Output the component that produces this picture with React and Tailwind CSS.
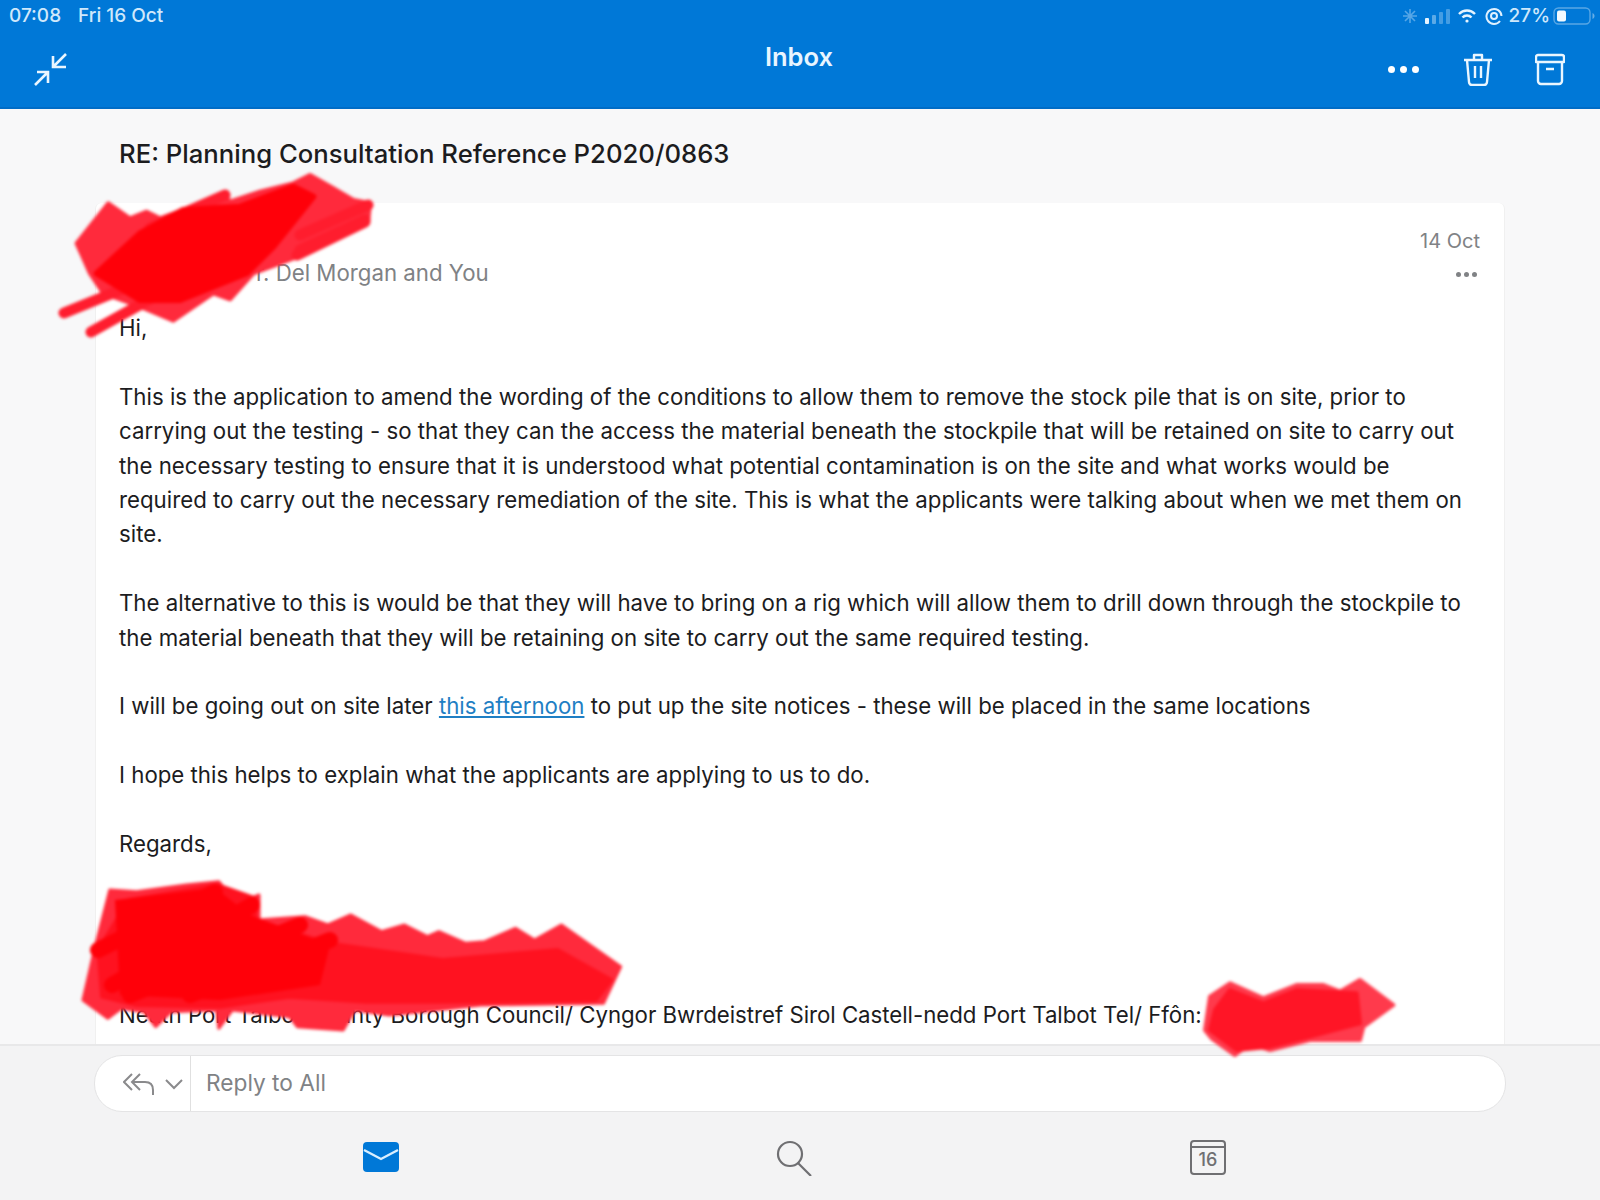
import React from "react";

const pts = (list, ox, oy, sx, sy) =>
  list.map(([x, y]) => `${ox + x * sx},${oy + y * sy}`).join(" ");

// redaction scribbles, traced from the screenshot
const topEdge = [[205,130],[110,250],[150,340],[190,400],[300,440],[400,482],[520,400],[570,418],[640,340],[760,295],[985,180],[990,130],[940,120],[880,85],[810,45],[760,70],[660,95],[570,125],[550,100],[430,150],[360,175],[320,155],[270,175]];
const topCore = [[170,340],[300,220],[430,150],[600,140],[760,80],[820,110],[700,260],[620,340],[420,420],[300,420]];
const signEdge = [[130,60],[90,240],[60,390],[125,445],[160,415],[220,425],[250,470],[290,425],[410,420],[415,475],[450,420],[600,440],[620,470],[740,480],[770,420],[860,435],[1100,405],[1420,400],[1465,290],[1310,165],[1240,210],[1190,175],[1110,215],[1060,220],[990,185],[960,200],[900,165],[840,185],[760,135],[700,165],[640,140],[520,150],[520,75],[480,95],[440,70],[415,35],[330,45],[200,65]];
const signCore = [[100,240],[180,90],[410,45],[510,85],[510,150],[700,220],[1000,270],[1300,240],[1440,330],[1400,390],[1100,395],[800,395],[600,380],[420,410],[200,405],[110,380]];
const phoneEdge = [[180,110],[240,70],[340,115],[440,75],[520,75],[570,95],[630,60],[730,135],[640,200],[630,240],[480,240],[360,270],[300,250],[255,285],[185,235],[165,210]];
const phoneCore = [[195,150],[240,90],[340,130],[440,90],[620,100],[630,190],[480,230],[360,260],[260,270],[180,210]];

function Redactions() {
  return (
    <svg className="absolute top-0 left-0 blur-[1.5px] pointer-events-none" width="1600" height="1200" viewBox="0 0 1600 1200" strokeLinejoin="round" strokeLinecap="round" fill="none">
      <polygon points={pts(topEdge, 40, 160, 1 / 3, 1 / 3)} fill="#ff2a3c" stroke="#ff2a3c" strokeWidth="4" />
      <path d="M64 313L150 278M91 332L170 288M368 205L300 235M365 220L300 250M297 255L365 222M225 195L150 228" stroke="#ff1d2e" strokeWidth="11" />
      <polygon points={pts(topCore, 40, 160, 1 / 3, 1 / 3)} fill="#ff0009" stroke="#ff0009" strokeWidth="6" />
      <polygon points={pts(signEdge, 60, 870, 0.3827, 1 / 3)} fill="#ff2a3c" stroke="#ff2a3c" strokeWidth="3" />
      <polygon points={pts(signCore, 60, 870, 0.3827, 1 / 3)} fill="#ff1220" stroke="#ff1220" strokeWidth="4" />
      <path d="M98 950L215 892M112 985L252 905M130 995L300 925M190 995L330 940" stroke="#ff0009" strokeWidth="16" />
      <polygon points="115,900 215,888 250,915 330,945 320,985 220,1000 120,995" fill="#ff0009" />
      <polygon points={pts(phoneEdge, 1150, 960, 1 / 3, 1 / 3)} fill="#ff3a4c" stroke="#ff3a4c" strokeWidth="4" />
      <polygon points={pts(phoneCore, 1150, 960, 1 / 3, 1 / 3)} fill="#ff1526" stroke="#ff1526" strokeWidth="4" />
    </svg>
  );
}

function StatusIcons() {
  return (
    <div className="flex items-center h-[30px]">
      <svg width="18" height="18" viewBox="0 0 18 18" className="mr-[5px] opacity-40" stroke="#d6ecff" strokeWidth="1.6">
        <path d="M9 2v14M2 9h14M4 4l10 10M14 4L4 14" />
      </svg>
      <svg width="26" height="18" viewBox="0 0 26 18" className="mr-[7px]">
        <rect x="1" y="11" width="4" height="6" rx="1" fill="#e6f4ff" />
        <rect x="8" y="8" width="4" height="9" rx="1" fill="#e6f4ff" opacity="0.4" />
        <rect x="15" y="5" width="4" height="12" rx="1" fill="#e6f4ff" opacity="0.3" />
        <rect x="22" y="2" width="4" height="15" rx="1" fill="#e6f4ff" opacity="0.3" />
      </svg>
      <svg width="20" height="16" viewBox="0 0 20 16" className="mr-[8px]" fill="none" stroke="#e6f4ff" strokeWidth="2.4">
        <path d="M2 6a11 11 0 0 1 16 0M5.500 9.500a6 6 0 0 1 9 0" />
        <circle cx="10" cy="13" r="1.6" fill="#e6f4ff" stroke="none" />
      </svg>
      <svg width="18" height="18" viewBox="0 0 18 18" className="mr-[6px]" fill="none" stroke="#dff1ff" strokeWidth="2">
        <path d="M15 14a7.500 7.500 0 1 1 1.500-5" />
        <circle cx="9" cy="9" r="3" />
      </svg>
      <span>27%</span>
      <svg width="42" height="20" viewBox="0 0 42 20" className="ml-[3px] mr-[2px]" fill="none">
        <rect x="1" y="2" width="36" height="16" rx="4.500" stroke="#ffffff" strokeOpacity="0.35" strokeWidth="1.4" />
        <rect x="4" y="4.500" width="9" height="11" rx="2" fill="#f2f9ff" />
        <path d="M39.500 7v6c1.200-.5 2-1.600 2-3s-.8-2.500-2-3z" fill="#ffffff" fillOpacity="0.4" />
      </svg>
    </div>
  );
}

function Header() {
  return (
    <header className="h-[109px] shrink-0 bg-[#0078d7] border-b-2 border-b-[#006cc6]">
      <div className="flex justify-between items-center h-[32px] pl-[9px] pr-[3px] text-[19px] font-medium text-[#cfe8fb]">
        <div className="flex gap-[17px]">
          <span>07:08</span>
          <span>Fri 16 Oct</span>
        </div>
        <StatusIcons />
      </div>
      <div className="grid grid-cols-3 pl-[33px] pr-[35px]">
        <div className="pt-[21px]">
          <svg width="35" height="33" viewBox="0 0 35 33" fill="none" stroke="#eaf6ff" strokeWidth="2.6">
            <path d="M33 1L20 14M20 3v11h13M15 19L2 32M4 19h11v11" />
          </svg>
        </div>
        <div className="text-center text-[25.5px] font-semibold text-[#e8f5ff] leading-[50px]">Inbox</div>
        <div className="flex justify-end items-start pt-[21px]">
          <div className="flex gap-[5px] mt-[13px] mr-[44px]">
            <span className="w-[7px] h-[7px] rounded-full bg-white" />
            <span className="w-[7px] h-[7px] rounded-full bg-white" />
            <span className="w-[7px] h-[7px] rounded-full bg-white" />
          </div>
          <svg width="30" height="33" viewBox="0 0 30 33" fill="none" stroke="#eaf6ff" strokeWidth="2.4" strokeLinejoin="round" className="mr-[42px]">
            <path d="M1 7h28M11 6V2h8v4M4 7l2 22a3 3 0 0 0 3 3h12a3 3 0 0 0 3-3l2-22M12 13v12M18 13v12" />
          </svg>
          <svg width="30" height="33" viewBox="0 0 30 33" fill="none" stroke="#eaf6ff" strokeWidth="2.4" strokeLinejoin="round">
            <path d="M3 2h24a2 2 0 0 1 2 2v5H1V4a2 2 0 0 1 2-2zM3 9v19a3 3 0 0 0 3 3h18a3 3 0 0 0 3-3V9M11 16h8" />
          </svg>
        </div>
      </div>
    </header>
  );
}

function EmailCard() {
  return (
    <div className="relative flex-1 min-h-0 mx-[95px] pl-[23px] pr-[20px] bg-white border-x border-[#f0f0f0] rounded-t-[6px] overflow-hidden text-[#1c1c1e] text-[22.25px] leading-[34.4px]">
      <div className="flex justify-between h-[108px] pt-[20px]">
        <div className="pl-[137px] pt-[33px] text-[#808285]">r. Del Morgan and You</div>
        <div className="flex flex-col items-end pr-[4px] text-[#808285] text-[20px] leading-[36px]">
          <span>14 Oct</span>
          <span className="flex gap-[3px] mt-[13px] mr-[3px]">
            <span className="w-[5px] h-[5px] rounded-full bg-[#808285]" />
            <span className="w-[5px] h-[5px] rounded-full bg-[#808285]" />
            <span className="w-[5px] h-[5px] rounded-full bg-[#808285]" />
          </span>
        </div>
      </div>
      <p>Hi,</p>
      <p className="mt-[34.4px] whitespace-nowrap">
        This is the application to amend the wording of the conditions to allow them to remove the stock pile that is on site, prior to<br />
        carrying out the testing - so that they can the access the material beneath the stockpile that will be retained on site to carry out<br />
        the necessary testing to ensure that it is understood what potential contamination is on the site and what works would be<br />
        required to carry out the necessary remediation of the site. This is what the applicants were talking about when we met them on<br />
        site.
      </p>
      <p className="mt-[34.4px] whitespace-nowrap">
        The alternative to this is would be that they will have to bring on a rig which will allow them to drill down through the stockpile to<br />
        the material beneath that they will be retaining on site to carry out the same required testing.
      </p>
      <p className="mt-[34.4px]">
        I will be going out on site later <a className="text-[#1f7fc4] underline">this afternoon</a> to put up the site notices - these will be placed in the same locations
      </p>
      <p className="mt-[34.4px]">I hope this helps to explain what the applicants are applying to us to do.</p>
      <p className="mt-[34.4px]">Regards,</p>
      <p className="mt-[137px] whitespace-nowrap tracking-[-0.03px]">Neath Port Talbot County Borough Council/ Cyngor Bwrdeistref Sirol Castell-nedd Port Talbot Tel/ Ffôn:</p>
    </div>
  );
}

function BottomBar() {
  return (
    <div className="h-[156px] shrink-0 bg-[#f3f3f4] border-t-2 border-t-[#e8e8e9]">
      <div className="flex mx-[94px] mt-[9px] h-[57px] bg-white border border-[#e4e4e5] rounded-[28px] overflow-hidden">
        <div className="flex items-center w-[96px] shrink-0 pl-[28px] border-r border-[#e0e0e0]">
          <svg width="31" height="24" viewBox="0 0 31 24" fill="none" stroke="#8a8a8c" strokeWidth="2">
            <path d="M9 2L1 10l8 8M17 2L9 10l8 8M9 10h13c5 0 8 3 8 8v5" />
          </svg>
          <svg width="20" height="12" viewBox="0 0 20 12" fill="none" stroke="#8a8a8c" strokeWidth="2" className="ml-[10px]">
            <path d="M2 2l8 8 8-8" />
          </svg>
        </div>
        <div className="flex items-center pl-[15px] text-[22.7px] text-[#808285]">Reply to All</div>
      </div>
      <nav className="flex items-start pl-[363px] pt-[30px]">
        <svg width="36" height="30" viewBox="0 0 36 30" className="mr-[377px]">
          <rect width="36" height="30" rx="4" fill="#0078d7" />
          <path d="M1 8l17 9L35 8" fill="none" stroke="#d9efff" strokeWidth="2.4" />
        </svg>
        <svg width="36" height="36" viewBox="0 0 36 36" fill="none" stroke="#6f6f72" strokeWidth="2.2" className="mr-[378px] -mt-[2px]">
          <circle cx="14" cy="14" r="12" />
          <path d="M22 23l13 13" />
        </svg>
        <div className="flex flex-col w-[36px] h-[35px] -mt-[2px] border-[2.5px] border-[#6f6f72] rounded-[4px]">
          <div className="h-[6px] border-b-2 border-[#6f6f72]" />
          <div className="text-center text-[18px] leading-[24px] font-medium text-[#6f6f72]">16</div>
        </div>
      </nav>
    </div>
  );
}

export default function App() {
  return (
    <div className="relative flex flex-col w-[1600px] h-[1200px] overflow-hidden bg-[#f8f8f9] font-['Inter','Liberation_Sans',sans-serif]">
      <Header />
      <h1 className="shrink-0 h-[94px] pl-[119px] pt-[28px] text-[25.7px] leading-[34px] font-[450] text-[#1c1c1e]">
        RE: Planning Consultation Reference P2020/0863
      </h1>
      <EmailCard />
      <BottomBar />
      <Redactions />
    </div>
  );
}
